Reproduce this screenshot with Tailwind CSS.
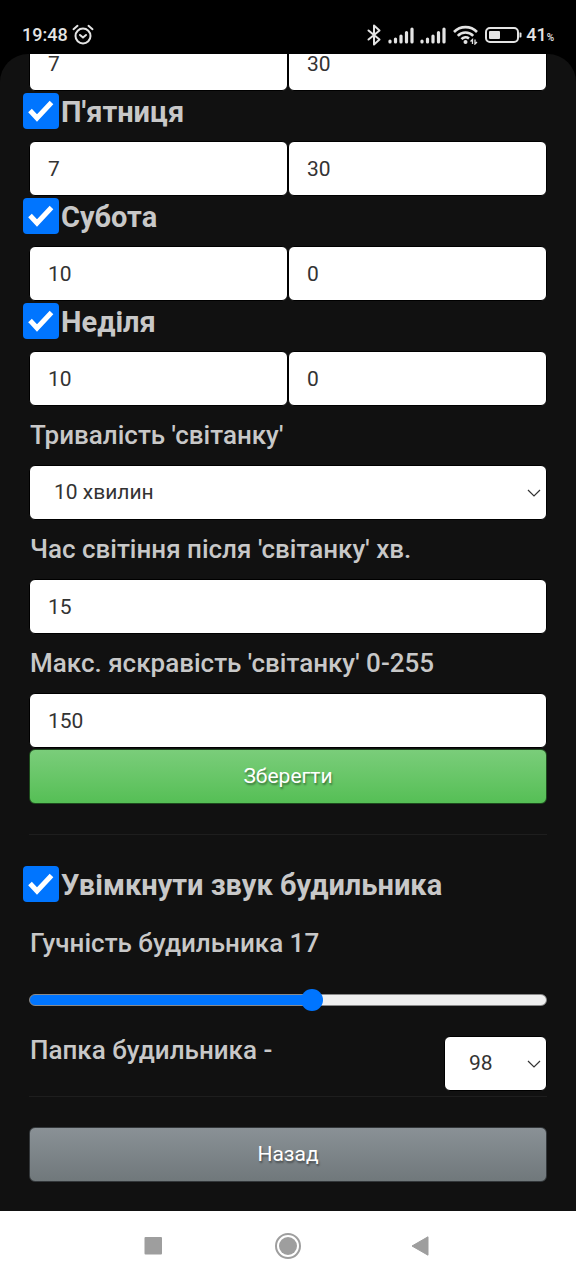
<!DOCTYPE html>
<html lang="uk">
<head>
<meta charset="utf-8">
<meta name="viewport" content="width=device-width, initial-scale=1">
<title>Будильник</title>
<script src="https://cdn.jsdelivr.net/npm/@tailwindcss/browser@4"></script>
</head>
<body class="flex min-h-screen flex-col bg-black font-[Roboto,'Noto_Sans',sans-serif] text-[#c8c8c8]">
<svg class="hidden" aria-hidden="true">
  <symbol id="check" viewBox="0 0 36 36"><path d="M7 17.500 14 25 28.500 9.500" fill="none" stroke="#fff" stroke-width="5"/></symbol>
  <symbol id="chevron" viewBox="0 0 14 8"><path d="M1 1l6 6 6-6" fill="none" stroke="#333" stroke-width="1.200"/></symbol>
  <symbol id="signal" viewBox="0 0 26 17"><path d="M2 14v1M7.500 12v3M13 9v6M18.500 5.500v9.500M24 2v13" stroke="#e4e4e4" stroke-width="3.200" stroke-linecap="round"/></symbol>
</svg>

<header class="flex h-[54px] items-end justify-between px-[22px] pb-[7px] text-[#e4e4e4]">
  <div class="flex items-center gap-1">
    <span class="text-[18px] leading-6 font-medium">19:48</span>
    <svg class="size-[22px]" viewBox="0 0 22 22" fill="none" stroke="#e4e4e4" stroke-width="2" stroke-linecap="round" stroke-linejoin="round" role="img" aria-label="Будильник"><circle cx="11" cy="12" r="7.500"/><path d="M8 11 11 13.600l3-2.600M1.500 5.200 5.500 1.800M20.500 5.200l-4-3.400"/></svg>
  </div>
  <div class="flex items-center">
    <svg class="mr-[7px] h-[22px] w-[14px]" viewBox="0 0 14 22" fill="none" stroke="#e4e4e4" stroke-width="2" stroke-linejoin="round" stroke-linecap="round" role="img" aria-label="Bluetooth"><path d="M1.500 6.500l11 9L7 20.500v-19L12.500 6.500l-11 9"/></svg>
    <svg class="mr-[6px] h-[17px] w-[26px]" aria-hidden="true"><use href="#signal"/></svg>
    <svg class="mr-[7px] h-[17px] w-[26px]" aria-hidden="true"><use href="#signal"/></svg>
    <svg class="mr-[7px] h-5 w-[25px]" viewBox="0 0 25 20" fill="none" stroke="#e4e4e4" stroke-width="2.600" role="img" aria-label="Wi-Fi"><path d="M1 7a16 16 0 0 1 23 0M4.800 10.800a10.500 10.500 0 0 1 15.400 0M8.500 14.200a5.500 5.500 0 0 1 7.500-.6"/><circle cx="12.500" cy="17" r="2" fill="#e4e4e4" stroke="none"/><path d="M19.500 19v-4.500l-2 2M22 14.500V19l2-2" stroke-width="1.300"/></svg>
    <svg class="mr-1 h-[18px] w-[37px]" viewBox="0 0 37 18" role="img" aria-label="Батарея"><rect x="1" y="2" width="32" height="14" rx="4" fill="none" stroke="#e4e4e4" stroke-width="2"/><rect x="4" y="5" width="11" height="8" rx="1" fill="#e4e4e4"/><path d="M34.500 6.500h1a1 1 0 0 1 1 1v3a1 1 0 0 1-1 1h-1z" fill="#e4e4e4"/></svg>
    <span class="flex items-baseline text-[18px] leading-6 font-medium">41<span class="text-[10px] leading-3">%</span></span>
  </div>
</header>

<main class="grow overflow-hidden rounded-t-[28px] bg-[#111] px-[29px]">
  <form>
    <div class="flex h-[37px] items-end overflow-hidden">
      <input aria-label="Четвер, години" value="7" class="h-[55px] min-w-0 flex-1 rounded-md border border-black bg-white px-[18px] text-[21px] text-[#333]">
      <input aria-label="Четвер, хвилини" value="30" class="h-[55px] min-w-0 flex-1 rounded-md border border-black bg-white px-[18px] text-[21px] text-[#333]">
    </div>

    <label class="-ml-[6px] flex h-[50px] items-start pt-[2px] text-[29px] leading-[38px] font-bold">
      <span class="grid size-[36px] shrink-0"><input type="checkbox" checked class="peer col-start-1 row-start-1 size-[36px] appearance-none rounded-[4px] bg-[#444] checked:bg-[#0075ff]"><svg class="pointer-events-none invisible col-start-1 row-start-1 size-[36px] peer-checked:visible"><use href="#check"/></svg></span>
      <span class="pl-[2px]">П'ятниця</span>
    </label>
    <div class="flex">
      <input aria-label="П'ятниця, години" value="7" class="h-[55px] min-w-0 flex-1 rounded-md border border-black bg-white px-[18px] text-[21px] text-[#333]">
      <input aria-label="П'ятниця, хвилини" value="30" class="h-[55px] min-w-0 flex-1 rounded-md border border-black bg-white px-[18px] text-[21px] text-[#333]">
    </div>

    <label class="-ml-[6px] flex h-[50px] items-start pt-[2px] text-[29px] leading-[38px] font-bold">
      <span class="grid size-[36px] shrink-0"><input type="checkbox" checked class="peer col-start-1 row-start-1 size-[36px] appearance-none rounded-[4px] bg-[#444] checked:bg-[#0075ff]"><svg class="pointer-events-none invisible col-start-1 row-start-1 size-[36px] peer-checked:visible"><use href="#check"/></svg></span>
      <span class="pl-[2px]">Субота</span>
    </label>
    <div class="flex">
      <input aria-label="Субота, години" value="10" class="h-[55px] min-w-0 flex-1 rounded-md border border-black bg-white px-[18px] text-[21px] text-[#333]">
      <input aria-label="Субота, хвилини" value="0" class="h-[55px] min-w-0 flex-1 rounded-md border border-black bg-white px-[18px] text-[21px] text-[#333]">
    </div>

    <label class="-ml-[6px] flex h-[50px] items-start pt-[2px] text-[29px] leading-[38px] font-bold">
      <span class="grid size-[36px] shrink-0"><input type="checkbox" checked class="peer col-start-1 row-start-1 size-[36px] appearance-none rounded-[4px] bg-[#444] checked:bg-[#0075ff]"><svg class="pointer-events-none invisible col-start-1 row-start-1 size-[36px] peer-checked:visible"><use href="#check"/></svg></span>
      <span class="pl-[2px]">Неділя</span>
    </label>
    <div class="flex">
      <input aria-label="Неділя, години" value="10" class="h-[55px] min-w-0 flex-1 rounded-md border border-black bg-white px-[18px] text-[21px] text-[#333]">
      <input aria-label="Неділя, хвилини" value="0" class="h-[55px] min-w-0 flex-1 rounded-md border border-black bg-white px-[18px] text-[21px] text-[#333]">
    </div>

    <label for="dawn" class="block h-[59px] pl-px text-[26px] leading-[59px] font-medium">Тривалість 'світанку'</label>
    <div class="grid items-center">
      <select id="dawn" class="col-start-1 row-start-1 h-[55px] w-full appearance-none rounded-md border border-black bg-white px-6 text-[21px] text-[#333]"><option>10 хвилин</option></select>
      <svg class="pointer-events-none col-start-1 row-start-1 mr-[6px] h-2 w-[14px] justify-self-end" aria-hidden="true"><use href="#chevron"/></svg>
    </div>

    <label for="after" class="block h-[59px] pl-px text-[26px] leading-[59px] font-medium">Час світіння після 'світанку' хв.</label>
    <input id="after" value="15" class="block h-[55px] w-full rounded-md border border-black bg-white px-[18px] text-[21px] text-[#333]">

    <label for="bright" class="block h-[59px] pl-px text-[26px] leading-[59px] font-medium">Макс. яскравість 'світанку' 0-255</label>
    <input id="bright" value="150" class="block h-[55px] w-full rounded-md border border-black bg-white px-[18px] text-[21px] text-[#333]">
    <button type="submit" class="mt-px h-[55px] w-full rounded-md border border-[#1d4a1d] bg-linear-to-b from-[#7acd7a] to-[#55bf55] text-[21px] text-white [text-shadow:1px_2px_2px_rgba(0,0,0,0.4)]">Зберегти</button>
  </form>

  <hr class="mt-[30px] mb-[29px] border-[#1e1e1e]">

  <label class="-ml-[6px] flex h-[50px] items-start pt-[2px] text-[29px] leading-[38px] font-bold">
    <span class="grid size-[36px] shrink-0"><input type="checkbox" checked class="peer col-start-1 row-start-1 size-[36px] appearance-none rounded-[4px] bg-[#444] checked:bg-[#0075ff]"><svg class="pointer-events-none invisible col-start-1 row-start-1 size-[36px] peer-checked:visible"><use href="#check"/></svg></span>
    <span class="pl-[2px]">Увімкнути звук будильника</span>
  </label>
  <label for="volume" class="block h-[59px] pl-px text-[26px] leading-[59px] font-medium">Гучність будильника 17</label>
  <div class="flex h-[54px] items-center">
    <input id="volume" type="range" min="0" max="31" value="17" style="--fill:54.700%" class="h-[22px] w-full appearance-none bg-transparent [&::-webkit-slider-runnable-track]:h-3 [&::-webkit-slider-runnable-track]:rounded-full [&::-webkit-slider-runnable-track]:border [&::-webkit-slider-runnable-track]:border-[#8a8a8a] [&::-webkit-slider-runnable-track]:bg-[linear-gradient(to_right,#0075ff_var(--fill),#efefef_var(--fill))] [&::-webkit-slider-thumb]:-mt-[6px] [&::-webkit-slider-thumb]:size-[22px] [&::-webkit-slider-thumb]:appearance-none [&::-webkit-slider-thumb]:rounded-full [&::-webkit-slider-thumb]:bg-[#0075ff]">
  </div>
  <div class="mt-[9px] flex items-start justify-between">
    <label for="folder" class="pl-px text-[26px] leading-7 font-medium">Папка будильника -</label>
    <div class="grid items-center">
      <select id="folder" class="col-start-1 row-start-1 h-[55px] w-[103px] appearance-none rounded-md border border-black bg-white px-6 text-[21px] text-[#333]"><option>98</option></select>
      <svg class="pointer-events-none col-start-1 row-start-1 mr-[6px] h-2 w-[14px] justify-self-end" aria-hidden="true"><use href="#chevron"/></svg>
    </div>
  </div>
  <hr class="mt-[5px] mb-[30px] border-[#1e1e1e]">
  <button type="button" class="mb-[29px] h-[55px] w-full rounded-md border border-[#33373a] bg-linear-to-b from-[#8a9196] to-[#70787b] text-[21px] text-white [text-shadow:1px_2px_2px_rgba(0,0,0,0.4)]">Назад</button>
</main>

<nav class="grid h-[69px] grid-cols-[1fr_84px_1fr] items-center bg-white px-[60px] text-[#9e9e9e]">
  <button type="button" aria-label="Останні програми" class="justify-self-center"><svg class="size-[28px]" viewBox="0 0 28 28" fill="currentColor"><rect x="5.500" y="5" width="17.500" height="17.500" rx="1"/></svg></button>
  <button type="button" aria-label="Головний екран" class="justify-self-center"><svg class="size-[28px]" viewBox="0 0 28 28" fill="currentColor"><circle cx="14" cy="14" r="12" fill="none" stroke="currentColor" stroke-width="2"/><circle cx="14" cy="14" r="9"/></svg></button>
  <button type="button" aria-label="Назад" class="justify-self-center"><svg class="size-[28px]" viewBox="0 0 28 28" fill="currentColor"><path d="M3 14 19 4.800v18.400z" stroke="currentColor" stroke-linejoin="round"/></svg></button>
</nav>
</body>
</html>
